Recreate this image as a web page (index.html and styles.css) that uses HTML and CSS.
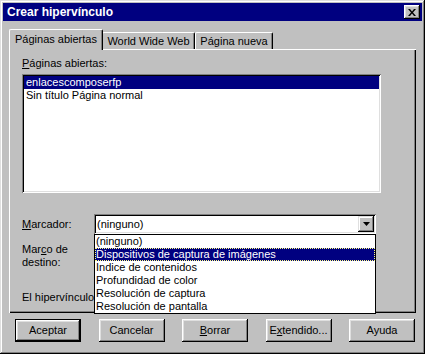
FILE: index.html
```html
<!DOCTYPE html>
<html lang="es">
<head>
<meta charset="UTF-8" />
<title>Crear hipervínculo</title>
<link rel="stylesheet" href="styles.css">
</head>
<body>
<div class="window">
  <div class="titlebar">
    <span class="title">Crear hipervínculo</span>
    <div class="close-btn">
      <svg width="8" height="7" viewBox="0 0 8 7"><path d="M0 0h2l2 2.5L6 0h2L5 3.5 8 7H6L4 4.5 2 7H0l3-3.5z" fill="#000"/></svg>
    </div>
  </div>

  <div class="tabs">
    <div class="tab tab-1 active">Páginas abiertas</div>
    <div class="tab tab-2">World Wide Web</div>
    <div class="tab tab-3">Página nueva</div>
  </div>

  <div class="panel">
    <div class="label"><u>P</u>áginas abiertas:</div>
    <div class="listbox">
      <div class="item selected">enlacescomposerfp</div>
      <div class="item">Sin título Página normal</div>
    </div>

    <div class="field-row">
      <div class="field-label"><u>M</u>arcador:</div>
      <div class="combo">
        <div class="combo-value">(ninguno)</div>
        <div class="combo-btn">
          <svg width="7" height="4" viewBox="0 0 7 4"><path d="M0 0h7L3.5 4z" fill="#000"/></svg>
        </div>
        <div class="dropdown">
          <div class="opt">(ninguno)</div>
          <div class="opt current">Dispositivos de captura de imágenes</div>
          <div class="opt">Indice de contenidos</div>
          <div class="opt">Profundidad de color</div>
          <div class="opt">Resolución de captura</div>
          <div class="opt">Resolución de pantalla</div>
        </div>
      </div>
    </div>

    <div class="field-label marco">Mar<u>c</u>o de<br>destino:</div>
    <div class="field-label link">El hipervínculo</div>
  </div>

  <div class="buttons">
    <div class="btn default">Aceptar</div>
    <div class="btn">Cancelar</div>
    <div class="btn"><u>B</u>orrar</div>
    <div class="btn">E<u>x</u>tendido...</div>
    <div class="btn">Ayuda</div>
  </div>
</div>
</body>
</html>
```

FILE: styles.css
```css
body {
  margin: 0; padding: 0;
  font-family: 'Liberation Sans', Arial, sans-serif;
  font-size: 11px;
  color: #000;
  background: #c0c0c0;
}
.window {
  width: 425px;
  height: 354px;
  box-sizing: border-box;
  padding: 3px;
  background: #c0c0c0;
  box-shadow: inset -1px -1px #000, inset 1px 1px #dfdfdf,
              inset -2px -2px #808080, inset 2px 2px #fff;
}
.titlebar {
  height: 18px;
  background: #000080;
  color: #fff;
  display: flex;
  align-items: center;
  justify-content: space-between;
  padding: 0 2px 0 4px;
}
.title {
  font-weight: bold;
  font-size: 12px;
}
.close-btn {
  width: 16px;
  height: 14px;
  background: #c0c0c0;
  display: flex;
  align-items: center;
  justify-content: center;
  box-shadow: inset -1px -1px #000, inset 1px 1px #fff,
              inset -2px -2px #808080, inset 2px 2px #dfdfdf;
}

/* pestañas */
.tabs {
  display: flex;
  align-items: flex-end;
  height: 20px;
  margin: 8px 0 0 6px;
}
.tab {
  box-sizing: border-box;
  height: 17px;
  background: #c0c0c0;
  border-top: 1px solid #fff;
  border-left: 1px solid #fff;
  border-right: 1px solid #000;
  border-radius: 2px 2px 0 0;
  box-shadow: inset -1px 0 #808080;
  text-align: center;
  line-height: 16px;
}
.tab.active {
  height: 21px;
  margin-bottom: -1px;
  position: relative;
  z-index: 1;
  line-height: 18px;
}
.tab-1 { width: 94px; }
.tab-2 { width: 93px; margin-left: -1px; }
.tab-3 { width: 78px; }

.panel {
  width: 407px;
  height: 264px;
  box-sizing: border-box;
  margin-left: 6px;
  padding: 8px 0 0 13px;
  box-shadow: inset 1px 1px #fff, inset -1px -1px #000, inset -2px -2px #808080;
}
.label {
  line-height: 13px;
}
.listbox {
  width: 359px;
  height: 119px;
  box-sizing: border-box;
  margin-top: 4px;
  padding: 2px;
  background: #fff;
  box-shadow: inset 1px 1px #808080, inset -1px -1px #fff,
              inset 2px 2px #000, inset -2px -2px #dfdfdf;
}
.item {
  height: 13px;
  line-height: 13px;
  padding-left: 2px;
}
.item.selected {
  background: #000080;
  color: #fff;
}

.field-row {
  display: flex;
  margin-top: 21px;
}
.field-label {
  width: 72px;
  line-height: 13px;
}
.field-row .field-label {
  line-height: 20px;
}
.combo {
  position: relative;
  width: 282px;
  height: 20px;
  box-sizing: border-box;
  background: #fff;
  padding: 2px;
  display: flex;
  align-items: center;
  justify-content: space-between;
  box-shadow: inset 1px 1px #808080, inset -1px -1px #fff,
              inset 2px 2px #000, inset -2px -2px #dfdfdf;
}
.combo-value {
  padding-left: 1px;
}
.combo-btn {
  width: 16px;
  height: 16px;
  background: #c0c0c0;
  display: flex;
  align-items: center;
  justify-content: center;
  box-shadow: inset -1px -1px #000, inset 1px 1px #dfdfdf,
              inset -2px -2px #808080, inset 2px 2px #fff;
}
.dropdown {
  position: absolute;
  top: 20px;
  left: 0;
  width: 282px;
  box-sizing: border-box;
  border: 1px solid #000;
  background: #fff;
  z-index: 2;
}
.opt {
  height: 13px;
  line-height: 13px;
  padding-left: 1px;
}
.opt.current {
  background: #000080;
  color: #fff;
  outline: 1px dotted #ffff80;
  outline-offset: -1px;
}
.marco {
  margin-top: 9px;
}
.link {
  margin-top: 22px;
  white-space: nowrap;
  overflow: hidden;
}

/* botones */
.buttons {
  display: flex;
  justify-content: space-between;
  width: 400px;
  margin: 6px 0 0 12px;
}
.btn {
  width: 66px;
  height: 23px;
  box-sizing: border-box;
  text-align: center;
  line-height: 23px;
  background: #c0c0c0;
  box-shadow: inset -1px -1px #000, inset 1px 1px #fff,
              inset -2px -2px #808080, inset 2px 2px #dfdfdf;
}
.btn.default {
  border: 1px solid #000;
  line-height: 21px;
}
```
